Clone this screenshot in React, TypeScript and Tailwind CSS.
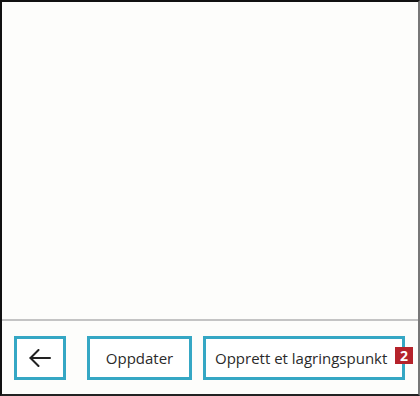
import React from "react";

export default function App() {
  return (
    <div
      className="w-[420px] h-[396px] bg-[#fdfdfb] border-l-2 border-t-2 border-b-2 border-r-2 border-l-[#111] border-t-[#111] border-b-[#222] border-r-[#777] flex flex-col"
      style={{ fontFamily: '"Open Sans", "DejaVu Sans", sans-serif' }}
    >
      <div className="flex-1" />
      <div className="h-[2px] bg-[#c4c4c4]" />
      <div className="flex items-center h-[73px] pl-[12px] pt-[1px]">
        <button className="w-[52px] h-[44px] border-[3px] border-[#35a7c4] flex items-center justify-center bg-white">
          <svg width="22" height="18" viewBox="0 0 22 18" fill="none" stroke="#222" strokeWidth="2" strokeLinecap="round" strokeLinejoin="round">
            <path d="M21 9H1.5" />
            <path d="M9.5 1L1.5 9l8 8" />
          </svg>
        </button>
        <button className="ml-[21px] w-[105px] h-[44px] border-[3px] border-[#35a7c4] flex items-center justify-center bg-white text-[15px] font-medium text-[#2a2a2a]">
          Oppdater
        </button>
        <div className="relative ml-[11px]">
          <button className="w-[202px] h-[44px] border-[3px] border-[#35a7c4] flex items-center pl-[9px] bg-white text-[15px] font-medium text-[#2a2a2a]">
            Opprett et lagringspunkt
          </button>
          <div className="absolute left-[192px] top-[11px] w-[18px] h-[17px] bg-[#b5232b] text-white text-[14px] font-bold flex items-center justify-center leading-none">
            2
          </div>
        </div>
      </div>
    </div>
  );
}
